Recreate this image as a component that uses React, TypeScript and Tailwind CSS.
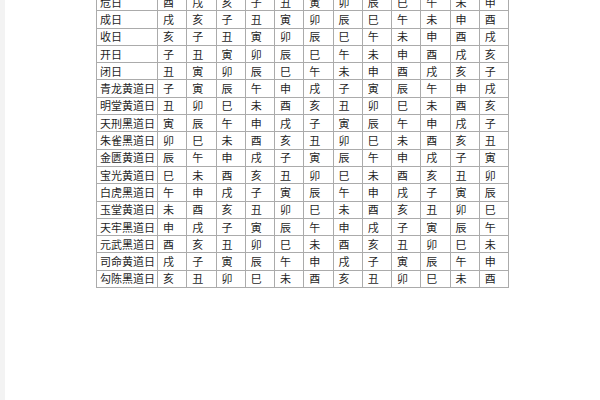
const rows: [string, string[]][] = [
  ["危日", ["酉", "戌", "亥", "子", "丑", "寅", "卯", "辰", "巳", "午", "未", "申"]],
  ["成日", ["戌", "亥", "子", "丑", "寅", "卯", "辰", "巳", "午", "未", "申", "酉"]],
  ["收日", ["亥", "子", "丑", "寅", "卯", "辰", "巳", "午", "未", "申", "酉", "戌"]],
  ["开日", ["子", "丑", "寅", "卯", "辰", "巳", "午", "未", "申", "酉", "戌", "亥"]],
  ["闭日", ["丑", "寅", "卯", "辰", "巳", "午", "未", "申", "酉", "戌", "亥", "子"]],
  ["青龙黄道日", ["子", "寅", "辰", "午", "申", "戌", "子", "寅", "辰", "午", "申", "戌"]],
  ["明堂黄道日", ["丑", "卯", "巳", "未", "酉", "亥", "丑", "卯", "巳", "未", "酉", "亥"]],
  ["天刑黑道日", ["寅", "辰", "午", "申", "戌", "子", "寅", "辰", "午", "申", "戌", "子"]],
  ["朱雀黑道日", ["卯", "巳", "未", "酉", "亥", "丑", "卯", "巳", "未", "酉", "亥", "丑"]],
  ["金匮黄道日", ["辰", "午", "申", "戌", "子", "寅", "辰", "午", "申", "戌", "子", "寅"]],
  ["宝光黄道日", ["巳", "未", "酉", "亥", "丑", "卯", "巳", "未", "酉", "亥", "丑", "卯"]],
  ["白虎黑道日", ["午", "申", "戌", "子", "寅", "辰", "午", "申", "戌", "子", "寅", "辰"]],
  ["玉堂黄道日", ["未", "酉", "亥", "丑", "卯", "巳", "未", "酉", "亥", "丑", "卯", "巳"]],
  ["天牢黑道日", ["申", "戌", "子", "寅", "辰", "午", "申", "戌", "子", "寅", "辰", "午"]],
  ["元武黑道日", ["酉", "亥", "丑", "卯", "巳", "未", "酉", "亥", "丑", "卯", "巳", "未"]],
  ["司命黄道日", ["戌", "子", "寅", "辰", "午", "申", "戌", "子", "寅", "辰", "午", "申"]],
  ["勾陈黑道日", ["亥", "丑", "卯", "巳", "未", "酉", "亥", "丑", "卯", "巳", "未", "酉"]],
];

export default function App() {
  return (
    <div className="flex w-[600px] h-[400px] overflow-hidden bg-white font-['Noto_Sans_CJK_SC',sans-serif]">
      {/* 左侧浅灰边条 */}
      <div className="w-[5px] shrink-0 bg-[#f3f3f3]" />
      <div className="flex-1 pl-[91px]">
        <table className="mt-[-7px] w-[413px] table-fixed border-collapse border border-[#a0a0a0] text-[11px] leading-none text-[#1f1f1f]">
          <colgroup>
            <col className="w-[61px]" />
            {Array.from({ length: 12 }).map((_, i) => (
              <col key={i} />
            ))}
          </colgroup>
          <tbody>
            {rows.map(([name, cells]) => (
              <tr key={name} className="h-[17.3px]">
                <td className="border border-[#ababab] pl-[3px] whitespace-nowrap">{name}</td>
                {cells.map((c, i) => (
                  <td key={i} className="border border-[#ababab] pl-[5px]">
                    {c}
                  </td>
                ))}
              </tr>
            ))}
          </tbody>
        </table>
      </div>
    </div>
  );
}
